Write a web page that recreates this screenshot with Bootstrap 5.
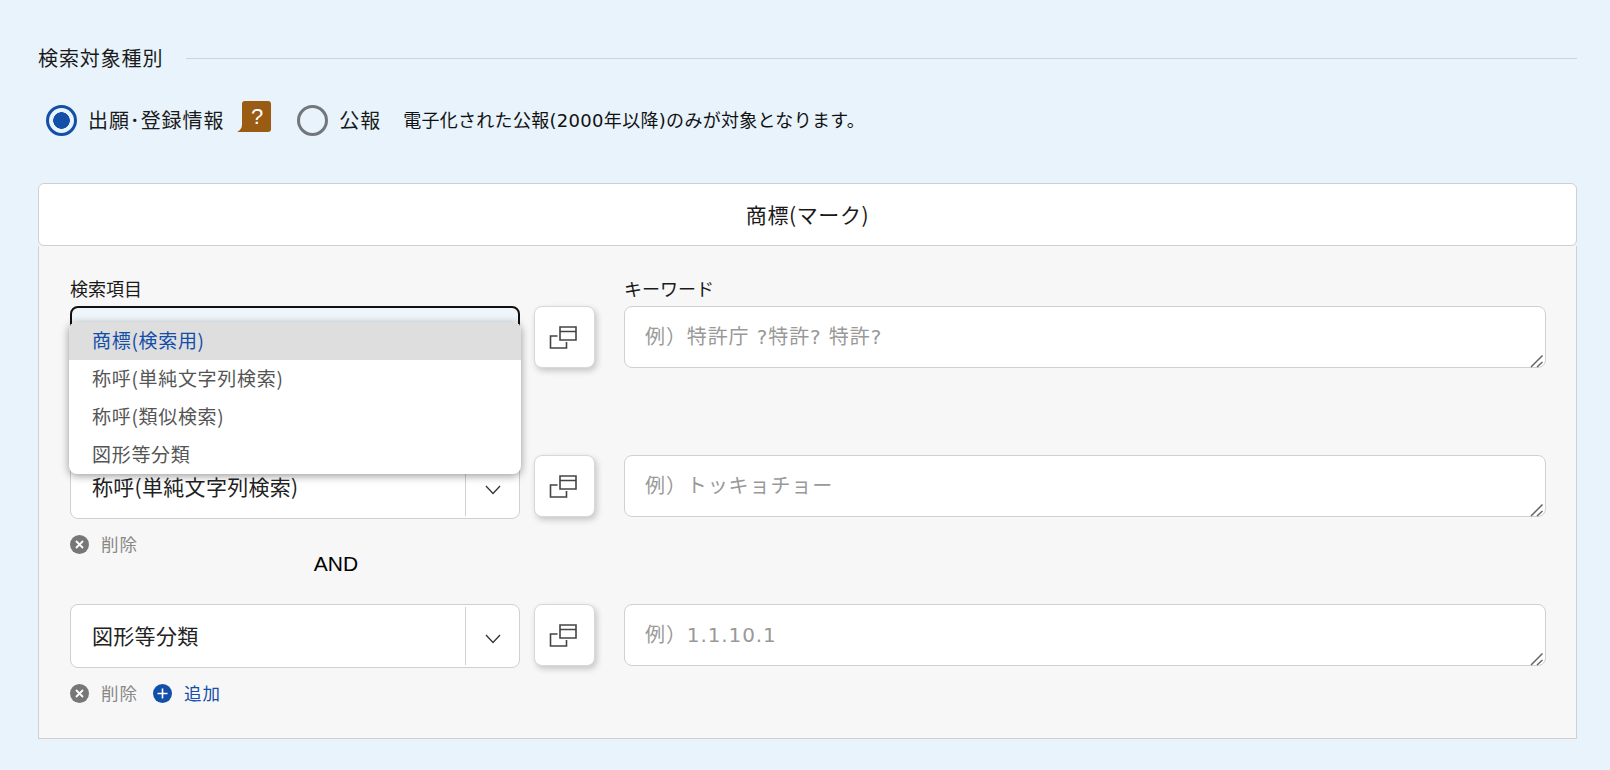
<!DOCTYPE html>
<html lang="ja">
<head>
<meta charset="utf-8">
<title>検索</title>
<link href="https://cdn.jsdelivr.net/npm/bootstrap@5.3.0/dist/css/bootstrap.min.css" rel="stylesheet">
<style>
body{background:#e8f3fc;font-family:"Noto Sans CJK JP","Noto Sans",sans-serif;color:#1a1a1a;overflow:hidden;}
.pg{padding:44px 33px 0 38px;}
.sec-title{font-size:20px;letter-spacing:.9px;line-height:28px;}
.sec-line{height:1px;background:#cfd3d6;margin-left:23px;}
.radio-row{margin:26px 0 0 8px;height:44px;}
.rd{width:31px;height:31px;border-radius:50%;margin:0;flex:none;appearance:none;background:transparent;border:3.5px solid #73767a;}
.rd:checked{border-color:#134ea8;background:radial-gradient(circle,#134ea8 0 8px,transparent 8.6px);}
.rd-label{font-size:20px;letter-spacing:.9px;margin:0 0 0 11px;}
.note{font-family:"DejaVu Sans","Noto Sans CJK JP",sans-serif;font-size:18px;letter-spacing:.3px;margin-left:22px;color:#111;}
.help{margin-left:13px;margin-right:25px;margin-top:-6px;flex:none;}
.head-box{margin-top:41px;height:63px;background:#fff;border:1px solid #d0d0d0;border-radius:6px;font-size:21px;letter-spacing:.6px;}
.panel-box{background:#f7f7f7;border:1px solid #d0d0d0;border-top:0;height:493px;padding:29px 30px 0 31px;}
.lbl{font-size:18px;line-height:24px;height:31px;margin:0;padding-top:1px;color:#1a1a1a;}
.col-l{width:450px;flex:none;}
.col-b{width:61px;margin:0 29px 0 14px;flex:none;}
.sel{height:64px;background:#fff;border:1px solid #d0d0d0;border-radius:8px;font-size:21px;letter-spacing:.3px;padding:0 0 0 21px;color:#222;}
.sel-open{border:2px solid #111;background:#eff6fb;}
.sel-sep{width:1px;height:58px;background:#d0d0d0;}
.sel-arrow{width:53px;padding-top:5px;}
.drop{width:452px;left:-1px;top:16px;padding:0;border:0;border-radius:8px;overflow:hidden;box-shadow:0 2px 9px rgba(0,0,0,.4);}
.drop .dropdown-item{height:38px;padding:0 23px;font-size:19px;letter-spacing:.7px;color:#555;line-height:36px;}
.drop .dropdown-item.active{background:#dedede;color:#134ea8;}
.copy{width:61px;height:62px;padding:0 3px 0 0;background:#fff;border:1px solid #d8d8d8;border-radius:8px;box-shadow:2px 3px 6px rgba(0,0,0,.2);}
.kw{height:62px;font-family:"DejaVu Sans","Noto Sans CJK JP",sans-serif;font-size:20px;letter-spacing:.9px;border:1px solid #d0d0d0;border-radius:8px;padding:15px 20px;background:#fff;resize:none;}
.kw::placeholder{color:#999;}
.grip{right:2px;bottom:2px;pointer-events:none;}
.tools{height:26px;margin-top:12px;font-size:17.5px;letter-spacing:1px;color:#888;}
.tool-add{margin-left:15px;}
.add-txt{color:#134ea8;}
.andw{text-align:center;width:532px;font-family:"Liberation Sans",sans-serif;font-size:21px;letter-spacing:0;line-height:26px;margin:-6px 0 27px;color:#000;}
</style>
</head>
<body>
<div class="pg">
  <div class="d-flex align-items-center"><div class="sec-title">検索対象種別</div><div class="sec-line flex-grow-1"></div></div>
  <div class="radio-row d-flex align-items-center">
    <input class="rd" type="radio" name="t" checked aria-label="出願・登録情報">
    <label class="rd-label">出願･登録情報</label>
    <svg class="help" width="35" height="33" viewBox="0 0 35 33"><path d="M8 0H31a3 3 0 0 1 3 3V28a3 3 0 0 1-3 3H0C3 29.500 5 27 5 24V3a3 3 0 0 1 3-3Z" fill="#9a5c13"/><text x="20" y="23" text-anchor="middle" fill="#fff" font-size="22" font-family="Liberation Sans">?</text></svg>
    <input class="rd" type="radio" name="t" aria-label="公報">
    <label class="rd-label">公報</label>
    <span class="note">電子化された公報(2000年以降)のみが対象となります。</span>
  </div>
  <div class="head-box d-flex align-items-center justify-content-center">商標(マーク)</div>
  <div class="panel-box">
    <div class="d-flex">
      <div class="col-l"><p class="lbl">検索項目</p></div>
      <div class="col-b"></div>
      <div class="flex-grow-1"><p class="lbl">キーワード</p></div>
    </div>
    <div class="d-flex">
      <div class="col-l position-relative">
        <div class="sel sel-open d-flex align-items-center"></div>
        <div class="dropdown-menu show drop">
          <a class="dropdown-item active" href="#">商標(検索用)</a>
          <a class="dropdown-item" href="#">称呼(単純文字列検索)</a>
          <a class="dropdown-item" href="#">称呼(類似検索)</a>
          <a class="dropdown-item" href="#">図形等分類</a>
        </div>
      </div>
      <div class="col-b"><button class="copy btn" aria-label="コピー"><svg width="28" height="24" viewBox="0 0 28 24" fill="none" stroke="#444" stroke-width="1.6"><path d="M11 1H27V14H11ZM11 5.500H27M8.500 10H1.500V22H17.500V16"/></svg></button></div>
      <div class="flex-grow-1 position-relative d-flex">
        <textarea class="kw form-control" placeholder="例）特許庁 ?特許? 特許?"></textarea>
        <svg class="grip position-absolute" width="14" height="14" viewBox="0 0 14 14" fill="none" stroke="#666" stroke-width="1.5"><path d="M1 13L12.500 1.500M7 13L12.500 8"/></svg>
      </div>
    </div>
    <div class="tools invisible"></div>
    <div class="andw invisible">&nbsp;</div>
    <div class="d-flex">
      <div class="col-l">
        <div class="sel d-flex align-items-center"><span class="flex-grow-1">称呼(単純文字列検索)</span><span class="sel-sep"></span><span class="sel-arrow d-flex justify-content-center"><svg width="16" height="10" viewBox="0 0 16 10" fill="none" stroke="#333" stroke-width="1.300"><path d="M1 1l7 7.500L15 1"/></svg></span></div>
      </div>
      <div class="col-b"><button class="copy btn" aria-label="コピー"><svg width="28" height="24" viewBox="0 0 28 24" fill="none" stroke="#444" stroke-width="1.6"><path d="M11 1H27V14H11ZM11 5.500H27M8.500 10H1.500V22H17.500V16"/></svg></button></div>
      <div class="flex-grow-1 position-relative d-flex">
        <textarea class="kw form-control" placeholder="例）トッキョチョー"></textarea>
        <svg class="grip position-absolute" width="14" height="14" viewBox="0 0 14 14" fill="none" stroke="#666" stroke-width="1.5"><path d="M1 13L12.500 1.500M7 13L12.500 8"/></svg>
      </div>
    </div>
    <div class="tools d-flex align-items-center">
      <svg width="19" height="19" viewBox="0 0 19 19" class="me-2"><circle cx="9.500" cy="9.500" r="9.500" fill="#777"/><path d="M6 6l7 7M13 6l-7 7" stroke="#fff" stroke-width="1.800"/></svg><span class="ms-1">削除</span>
    </div>
    <div class="andw">AND</div>
    <div class="d-flex">
      <div class="col-l">
        <div class="sel d-flex align-items-center"><span class="flex-grow-1">図形等分類</span><span class="sel-sep"></span><span class="sel-arrow d-flex justify-content-center"><svg width="16" height="10" viewBox="0 0 16 10" fill="none" stroke="#333" stroke-width="1.300"><path d="M1 1l7 7.500L15 1"/></svg></span></div>
      </div>
      <div class="col-b"><button class="copy btn" aria-label="コピー"><svg width="28" height="24" viewBox="0 0 28 24" fill="none" stroke="#444" stroke-width="1.6"><path d="M11 1H27V14H11ZM11 5.500H27M8.500 10H1.500V22H17.500V16"/></svg></button></div>
      <div class="flex-grow-1 position-relative d-flex">
        <textarea class="kw form-control" placeholder="例）1.1.10.1"></textarea>
        <svg class="grip position-absolute" width="14" height="14" viewBox="0 0 14 14" fill="none" stroke="#666" stroke-width="1.5"><path d="M1 13L12.500 1.500M7 13L12.500 8"/></svg>
      </div>
    </div>
    <div class="tools d-flex align-items-center">
      <svg width="19" height="19" viewBox="0 0 19 19" class="me-2"><circle cx="9.500" cy="9.500" r="9.500" fill="#777"/><path d="M6 6l7 7M13 6l-7 7" stroke="#fff" stroke-width="1.800"/></svg><span class="ms-1">削除</span>
      <svg width="19" height="19" viewBox="0 0 19 19" class="tool-add me-2"><circle cx="9.500" cy="9.500" r="9.500" fill="#134ea8"/><path d="M4.500 9.500h10M9.500 4.500v10" stroke="#fff" stroke-width="1.600"/></svg><span class="ms-1 add-txt">追加</span>
    </div>
  </div>
</div>
<script src="https://cdn.jsdelivr.net/npm/bootstrap@5.3.0/dist/js/bootstrap.bundle.min.js"></script>
</body>
</html>
